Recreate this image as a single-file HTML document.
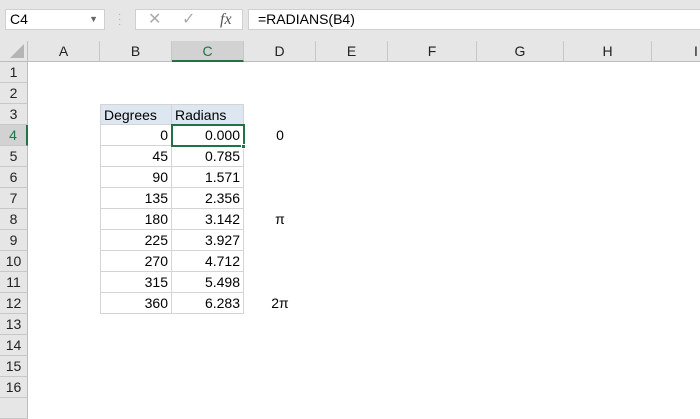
<!DOCTYPE html>
<html><head><style>
body{margin:0;width:700px;height:400px;overflow:hidden;background:#fff;font-family:"Liberation Sans",sans-serif;position:relative}
.a{position:absolute;box-sizing:border-box}
.top{left:0;top:0;width:700px;height:41px;background:#e6e6e6}
.ch{top:41px;height:21px;background:#e6e6e6;border-right:1px solid #c8c8c8;border-bottom:1px solid #bdbdbd;font-size:14px;color:#222;text-align:center;line-height:21px}
.rh{left:0;width:28px;height:21px;background:#e6e6e6;border-bottom:1px solid #c8c8c8;border-right:1px solid #bdbdbd;font-size:14px;color:#222;text-align:center;line-height:21px}
.c{height:21px;border-right:1px solid #d4d4d4;border-bottom:1px solid #d4d4d4;font-size:14px;line-height:21px;padding:0 3px;text-align:right;color:#000}
</style></head><body>
<div class="a top"></div>
<div class="a" style="left:5px;top:9px;width:100px;height:21px;background:#fff;border:1px solid #d0d0d0;font-size:14px;line-height:19px;padding-left:4px">C4<span style="position:absolute;right:6px;top:0;font-size:9px;color:#666">▼</span></div>
<div class="a" style="left:118px;top:12px;width:3px;height:16px;color:#aaa;font-size:10px;line-height:5px">·<br>·<br>·</div>
<div class="a" style="left:135px;top:9px;width:108px;height:21px;background:#fff;border:1px solid #d0d0d0;font-size:16px;line-height:19px;color:#aaa">
<span style="position:absolute;left:12px">✕</span><span style="position:absolute;left:46px">✓</span><span style="position:absolute;left:84px;font-family:'Liberation Serif',serif;font-style:italic;color:#555">fx</span></div>
<div class="a" style="left:248px;top:9px;width:460px;height:21px;background:#fff;border:1px solid #d0d0d0;font-size:14px;line-height:19px;padding-left:9px">=RADIANS(B4)</div>
<div class="a" style="left:0;top:41px;width:28px;height:21px;background:#e6e6e6;border-right:1px solid #bdbdbd;border-bottom:1px solid #bdbdbd"><div style="position:absolute;right:3px;bottom:3px;width:0;height:0;border-left:14px solid transparent;border-bottom:14px solid #b5b5b5"></div></div>
<div class="a ch" style="left:28px;width:72px">A</div>
<div class="a ch" style="left:100px;width:72px">B</div>
<div class="a ch" style="left:172px;width:72px;background:#d2d2d2;color:#217346;border-bottom:2px solid #217346">C</div>
<div class="a ch" style="left:244px;width:72px">D</div>
<div class="a ch" style="left:316px;width:72px">E</div>
<div class="a ch" style="left:388px;width:89px">F</div>
<div class="a ch" style="left:477px;width:87px">G</div>
<div class="a ch" style="left:564px;width:88px">H</div>
<div class="a ch" style="left:652px;width:60px;text-align:left;padding-left:42px">I</div>
<div class="a rh" style="top:62px">1</div>
<div class="a rh" style="top:83px">2</div>
<div class="a rh" style="top:104px">3</div>
<div class="a rh" style="top:125px;background:#d2d2d2;color:#217346;border-right:2px solid #217346">4</div>
<div class="a rh" style="top:146px">5</div>
<div class="a rh" style="top:167px">6</div>
<div class="a rh" style="top:188px">7</div>
<div class="a rh" style="top:209px">8</div>
<div class="a rh" style="top:230px">9</div>
<div class="a rh" style="top:251px">10</div>
<div class="a rh" style="top:272px">11</div>
<div class="a rh" style="top:293px">12</div>
<div class="a rh" style="top:314px">13</div>
<div class="a rh" style="top:335px">14</div>
<div class="a rh" style="top:356px">15</div>
<div class="a rh" style="top:377px">16</div>
<div class="a rh" style="top:398px"></div>
<div class="a" style="left:100px;top:104px;width:144px;height:210px;border-left:1px solid #d4d4d4;border-top:1px solid #d4d4d4"></div>
<div class="a c" style="left:100px;top:104px;width:72px;background:#dde7f1;text-align:left;border-left:1px solid #d4d4d4;border-top:1px solid #d4d4d4">Degrees</div>
<div class="a c" style="left:172px;top:104px;width:72px;background:#dde7f1;text-align:left;border-top:1px solid #d4d4d4">Radians</div>
<div class="a c" style="left:100px;top:125px;width:72px">0</div><div class="a c" style="left:172px;top:125px;width:72px">0.000</div>
<div class="a c" style="left:100px;top:146px;width:72px">45</div><div class="a c" style="left:172px;top:146px;width:72px">0.785</div>
<div class="a c" style="left:100px;top:167px;width:72px">90</div><div class="a c" style="left:172px;top:167px;width:72px">1.571</div>
<div class="a c" style="left:100px;top:188px;width:72px">135</div><div class="a c" style="left:172px;top:188px;width:72px">2.356</div>
<div class="a c" style="left:100px;top:209px;width:72px">180</div><div class="a c" style="left:172px;top:209px;width:72px">3.142</div>
<div class="a c" style="left:100px;top:230px;width:72px">225</div><div class="a c" style="left:172px;top:230px;width:72px">3.927</div>
<div class="a c" style="left:100px;top:251px;width:72px">270</div><div class="a c" style="left:172px;top:251px;width:72px">4.712</div>
<div class="a c" style="left:100px;top:272px;width:72px">315</div><div class="a c" style="left:172px;top:272px;width:72px">5.498</div>
<div class="a c" style="left:100px;top:293px;width:72px">360</div><div class="a c" style="left:172px;top:293px;width:72px">6.283</div>
<div class="a" style="left:171px;top:124px;width:74px;height:23px;border:2px solid #217346"></div>
<div class="a" style="left:241px;top:144px;width:5px;height:5px;background:#217346;border:1px solid #fff"></div>
<div class="a" style="left:244px;top:125px;width:72px;font-size:14px;line-height:21px;text-align:center">0</div>
<div class="a" style="left:244px;top:209px;width:72px;font-size:14px;line-height:21px;text-align:center">π</div>
<div class="a" style="left:244px;top:293px;width:72px;font-size:14px;line-height:21px;text-align:center">2π</div>
</body></html>
